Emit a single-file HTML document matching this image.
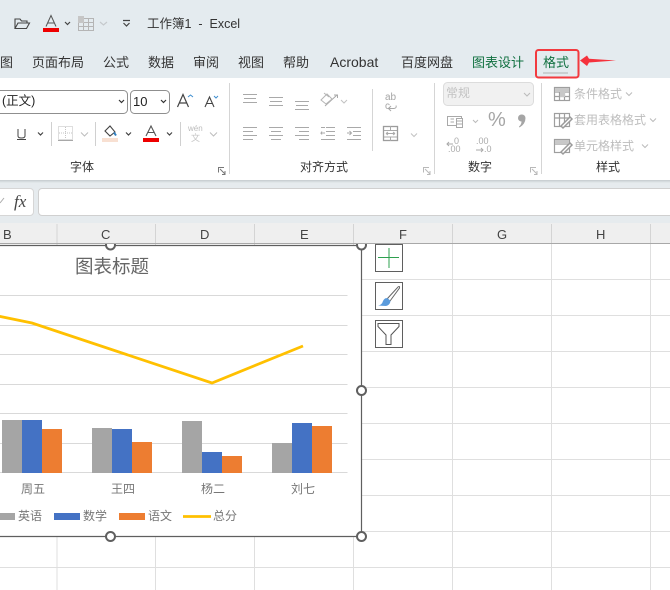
<!DOCTYPE html>
<html><head><meta charset="utf-8">
<style>
html,body{margin:0;padding:0;width:670px;height:590px;overflow:hidden;background:#fff}
body{position:relative;font-family:"Liberation Sans","Microsoft YaHei","Noto Sans CJK SC",sans-serif;color:#333}
.a{position:absolute}
.t{position:absolute;white-space:nowrap;line-height:1;font-size:13px}
svg{position:absolute;left:0;top:0}
</style></head><body>
<div class="a" style="left:0;top:0;width:670px;height:78px;background:#e4ebef"></div>
<div class="a" style="left:0;top:78px;width:670px;height:102px;background:#fff"></div>
<div class="a" style="left:0;top:180px;width:670px;height:43px;background:#e6ebee"></div>
<div class="a" style="left:0;top:180px;width:670px;height:3px;background:linear-gradient(#c5cbce,#e6ebee)"></div>
<div class="a" style="left:0;top:223px;width:670px;height:20px;background:#efefef"></div>
<div class="a" style="left:-10px;top:188px;width:42px;height:26px;background:#fff;border:1px solid #d6d6d6;border-radius:4px"></div>
<div class="a" style="left:38px;top:188px;width:640px;height:26px;background:#fff;border:1px solid #d0d0d0;border-radius:4px"></div>

<svg width="670" height="590" viewBox="0 0 670 590">
<defs><clipPath id="c"><rect x="0" y="244" width="670" height="20"/></clipPath></defs>
<!-- grid -->
<g stroke="#dfdfdf" stroke-width="1" fill="none">
<path d="M57 224V243M155.500 224V243M254.500 224V243M353.500 224V243M452.500 224V243M551.500 224V243M650.500 224V243" stroke="#d4d4d4"/>
<path d="M57 243V590M155.500 243V590M254.500 243V590M353.500 243V590M452.500 243V590M551.500 243V590M650.500 243V590"/>
<path d="M0 279.500H670M0 315.500H670M0 351.500H670M0 387.500H670M0 423.500H670M0 459.500H670M0 495.500H670M0 531.500H670M0 567.500H670"/>
</g>
<path d="M0 243.500H670" stroke="#a8a8a8" stroke-width="1"/>
<!-- chart -->
<rect x="-5" y="245" width="366.500" height="291.500" fill="#fff"/>
<path d="M0 295.500H347.500M0 325.500H347.500M0 354.500H347.500M0 384.500H347.500M0 413.500H347.500M0 443.500H347.500M0 472.500H347.500" stroke="#d9d9d9" stroke-width="1"/>
<g fill="#a5a5a5"><rect x="2" y="420" width="20" height="53"/><rect x="92" y="428" width="20" height="45"/><rect x="182" y="421" width="20" height="52"/><rect x="272" y="443" width="20" height="30"/><rect x="-13" y="513" width="28" height="7"/></g>
<g fill="#4472c4"><rect x="22" y="420" width="20" height="53"/><rect x="112" y="429" width="20" height="44"/><rect x="202" y="452" width="20" height="21"/><rect x="292" y="423" width="20" height="50"/><rect x="54" y="513" width="26" height="7"/></g>
<g fill="#ed7d31"><rect x="42" y="429" width="20" height="44"/><rect x="132" y="442" width="20" height="31"/><rect x="222" y="456" width="20" height="17"/><rect x="312" y="426" width="20" height="47"/><rect x="119" y="513" width="26" height="7"/></g>
<path d="M-2 316L32 323L212 383L303 346" fill="none" stroke="#ffc000" stroke-width="2.800"/>
<path d="M183 516.500H211" stroke="#ffc000" stroke-width="2.800"/>
<path d="M-2 245.500H361.500V536.500H-2" fill="none" stroke="#5f5f5f" stroke-width="1.200"/>
<g fill="#fff" stroke="#5f5f5f" stroke-width="2"><g clip-path="url(#c)"><circle cx="110.500" cy="245" r="4.500"/><circle cx="361.500" cy="245" r="4.500"/></g><circle cx="361.500" cy="390.500" r="4.500"/><circle cx="110.500" cy="536.500" r="4.500"/><circle cx="361.500" cy="536.500" r="4.500"/></g>
<!-- chart buttons -->
<g fill="#fff" stroke="#5f5f5f" stroke-width="1"><rect x="375.500" y="244.500" width="27" height="27"/><rect x="375.500" y="282.500" width="27" height="27"/><rect x="375.500" y="320.500" width="27" height="27"/></g>
<path d="M389 248V268M378 257.500H399" stroke="#2ea04f" stroke-width="1"/>
<path d="M387 299L398 287Q400 285.500 399.500 288L390 301Z" fill="#fff" stroke="#666" stroke-width="1"/>
<path d="M378 305.500Q382 305 383 301Q385 297 388 298.500L390.500 301Q390 305 386 306Z" fill="#5a9bdc"/>
<path d="M378 323.500H399V326.500L391 335V344.500H386V335L378 326.500Z" fill="#fff" stroke="#555" stroke-width="1"/>
<!-- fx -->
<path d="M0 203L4 198" stroke="#aaa" stroke-width="1"/>
<!-- QAT -->
<path d="M15 28V19H20L21.500 21H27V23M15 28.500L18 23H29.500L26.500 28.500H15Z" fill="none" stroke="#444" stroke-width="1.100"/>
<rect x="43" y="28" width="16" height="4" fill="#ee0000"/>
<path d="M46 26.500L51 15.500L56 26.500M47.500 23H54.500" fill="none" stroke="#555" stroke-width="1"/>
<path d="M65 22L67.500 24.500L70 22" fill="none" stroke="#444" stroke-width="1.200"/>
<g stroke="#b5b5b5" fill="none"><rect x="78.500" y="18.500" width="15" height="12"/><path d="M78 22.500H94M78 26.500H94M83.500 18V31M88.500 18V31"/></g>
<rect x="78" y="16" width="6" height="7" fill="#c6c6c6"/>
<path d="M100 22L103.500 25L107 22" fill="none" stroke="#c5c9cc" stroke-width="1.200"/>
<path d="M123 20.500H130M123.500 23L126.500 26L129.500 23" fill="none" stroke="#444" stroke-width="1.200"/>
<!-- font controls -->
<rect x="-8" y="90.500" width="135.500" height="23" rx="4" fill="#fff" stroke="#8f8f8f"/>
<rect x="130.500" y="90.500" width="39" height="23" rx="4" fill="#fff" stroke="#8f8f8f"/>
<g fill="none" stroke="#333" stroke-width="1.200"><path d="M119 100L121.500 102.500L124 100M161 100L163.500 102.500L166 100"/></g>
<path d="M177.500 107L183 94.500L188.500 107M179.500 103H186.500" fill="none" stroke="#444" stroke-width="1.200"/>
<path d="M188 97L190.500 95L193 97" fill="none" stroke="#3f8fd0" stroke-width="1"/>
<path d="M205 107L209.500 97L214 107M206.500 103.500H212.500" fill="none" stroke="#444" stroke-width="1.100"/>
<path d="M214 96L216 98L218 96" fill="none" stroke="#3f8fd0" stroke-width="1"/>
<!-- font row 2 -->
<path d="M18 129V136Q18 138 21.500 138Q25 138 25 136V129M17 139.500H26" fill="none" stroke="#444" stroke-width="1"/>
<path d="M38 132.500L40.500 135L43 132.500M126 132.500L128.500 135L131 132.500M167 132.500L169.500 135L172 132.500" fill="none" stroke="#444" stroke-width="1.200"/>
<path d="M51.500 122V146M95.500 122V146M180.500 122V146" stroke="#d0d0d0"/>
<rect x="58.500" y="126.500" width="14" height="13" fill="none" stroke="#bcbcbc" stroke-dasharray="1 1"/>
<path d="M58 140.500H73" stroke="#a8a8a8"/>
<path d="M65.500 127V139M59 133H72" stroke="#c5c5c5" stroke-dasharray="1 1"/>
<path d="M81 132.500L84.500 136L88 132.500M210 132.500L213.500 136L217 132.500" fill="none" stroke="#bdbdbd" stroke-width="1"/>
<rect x="102" y="138" width="16" height="4" fill="#f8e0d2"/>
<path d="M105 131L110 126L115 132L110 136Z" fill="none" stroke="#444" stroke-width="1.100"/>
<path d="M114 132.500L116 135.500" stroke="#2f7fc1" stroke-width="2"/>
<rect x="143" y="138" width="16" height="4" fill="#ee0000"/>
<path d="M146 136L151 126L156 136M148 132.500H154" fill="none" stroke="#555" stroke-width="1.100"/>
<!-- dividers -->
<path d="M229.500 83V174M434.500 83V174M541.500 83V174" stroke="#d5d5d5"/>
<path d="M372.500 89V151" stroke="#d5d5d5"/>
<!-- align -->
<g stroke="#a9a9a9" stroke-width="1" fill="none">
<path d="M243 94.500H257M244 98.500H256M243 102.500H257"/>
<path d="M269 97.500H283M270 101.500H282M269 105.500H283"/>
<path d="M295 101.500H309M296 105.500H308M295 109.500H309"/>
<path d="M243 127.500H257M243 131.500H253M243 135.500H257M243 139.500H253"/>
<path d="M269 127.500H283M271 131.500H281M269 135.500H283M271 139.500H281"/>
<path d="M295 127.500H309M299 131.500H309M295 135.500H309M299 139.500H309"/>
<path d="M326 127.500H335M326 131.500H335M326 135.500H335M321 139.500H335M321 127.500H325M322 131.500L321 133L325 133M322 134.500L321 133"/>
<path d="M347 127.500H361M353 131.500H361M353 135.500H361M347 139.500H361M347 133H351M349.500 131L351.500 133L349.500 135"/>
<path d="M325 106L337 95M334 95H337.500V98"/>
<path d="M321 100L327 94L332 99L326 104Z M324 93L329 97" stroke="#b5b5b5"/>
<path d="M341 100L344 103L347 100M411 133.500L414 136.500L417 133.500" stroke="#c2c2c2"/>
<path d="M388 108.500H394Q397 108 396 105.500M388.500 108.500L391 106M388.500 108.500L391 111" stroke="#a9a9a9"/>
<rect x="383.500" y="126.500" width="14" height="14" stroke="#9c9c9c" stroke-width="1.300"/>
<path d="M384 130.500H397M384 137H397M390.500 126V130M390.500 137V141M386 133.500H395M386 133.500L388 132M386 133.500L388 135M395 133.500L393 132M395 133.500L393 135"/>
</g>
<!-- number -->
<rect x="443.500" y="82.500" width="90" height="23" rx="4" fill="#f1f1f1" stroke="#dcdcdc"/>
<path d="M524 93L527 96L530 93M473 120L475.500 122.500L478 120M626 92.500L629 95.500L632 92.500M650 118.500L653 121.500L656 118.500M642 144.500L645 147.500L648 144.500" fill="none" stroke="#bbb" stroke-width="1"/>
<g fill="none" stroke="#a9a9a9" stroke-width="1">
<rect x="447.500" y="116.500" width="14" height="9"/>
<rect x="456.500" y="118.500" width="6" height="9" fill="#fff"/><path d="M456.500 121H462.500M456.500 124H462.500M450.500 119H454M450.500 122H454"/>
<path d="M447 144H453M449 142L447 144L449 146"/>
<path d="M476 150H483M481 148L483 150L481 152"/>
</g>
<path d="M521.500 114.500A3.500 3.500 0 0 1 525.500 118Q525.500 124 519.500 127.500L519 126.500Q521.500 124.500 521.500 121.500A3.500 3.500 0 0 1 521.500 114.500Z" fill="#a5a5a5"/>
<!-- styles -->
<g fill="none" stroke="#9e9e9e" stroke-width="1.200">
<rect x="554.500" y="87.500" width="15" height="13"/><path d="M554 92H570M554 96.500H570M559.500 87V101M564.500 87V101"/>
<rect x="554.500" y="113.500" width="15" height="13"/><path d="M554 118H570M559.500 113V127M564.500 113V122"/>
<rect x="554.500" y="139.500" width="15" height="13"/><path d="M554 144H570M559.500 139V144"/>
</g>
<rect x="555" y="88" width="14" height="4" fill="#c8c8c8"/>
<rect x="560" y="92" width="5" height="5" fill="#c8c8c8"/>
<rect x="555" y="140" width="14" height="4" fill="#c8c8c8"/>
<path d="M561 126L570 117L572 119L563 128ZM561 152L570 143L572 145L563 154Z" fill="#fff" stroke="#9a9a9a" stroke-width="1.500"/>
<!-- dialog launchers -->
<g fill="none" stroke="#777" stroke-width="1"><path d="M218.500 172.500V167.500H224M220 169L225 174M225 171V174.500H222"/></g>
<g fill="none" stroke="#b9b9b9" stroke-width="1"><path d="M423.500 172.500V167.500H429M425 169L430 174M430 171V174.500H427"/><path d="M530.500 172.500V167.500H536M532 169L537 174M537 171V174.500H534"/></g>
<!-- format highlight -->
<rect x="536" y="50" width="42.500" height="27.500" rx="2.500" fill="none" stroke="#f23a3f" stroke-width="2"/>
<rect x="543" y="72" width="25" height="2" fill="#c9cfd1"/>
<path d="M580 60.500L587 55.500L589 58.800L616 60.500L589 62.500L587 66Z" fill="#f5323c"/>
</svg>

<div class="t" style="left:147px;top:18px;font-size:12.500px;color:#333">工作簿1 &nbsp;- &nbsp;Excel</div>
<div class="t" style="left:0;top:56px;color:#333">图</div>
<div class="t" style="left:32px;top:56px;color:#333">页面布局</div>
<div class="t" style="left:103px;top:56px;color:#333">公式</div>
<div class="t" style="left:148px;top:56px;color:#333">数据</div>
<div class="t" style="left:193px;top:56px;color:#333">审阅</div>
<div class="t" style="left:238px;top:56px;color:#333">视图</div>
<div class="t" style="left:283px;top:56px;color:#333">帮助</div>
<div class="t" style="left:330px;top:55px;font-size:14px;color:#333">Acrobat</div>
<div class="t" style="left:401px;top:56px;color:#333">百度网盘</div>
<div class="t" style="left:472px;top:56px;color:#107040">图表设计</div>
<div class="t" style="left:543px;top:56px;color:#107040">格式</div>

<div class="t" style="left:2px;top:95px;font-size:12.500px;color:#222">(正文)</div>
<div class="t" style="left:133px;top:95px;font-size:13px;color:#222">10</div>
<div class="t" style="left:188px;top:125px;font-size:8px;color:#bbb">wén</div>
<div class="t" style="left:191px;top:134px;font-size:9px;color:#c5c5c5">文</div>
<div class="t" style="left:70px;top:161px;font-size:12px;color:#333">字体</div>
<div class="t" style="left:300px;top:161px;font-size:12px;color:#333">对齐方式</div>
<div class="t" style="left:468px;top:161px;font-size:12px;color:#333">数字</div>
<div class="t" style="left:596px;top:161px;font-size:12px;color:#333">样式</div>
<div class="t" style="left:385px;top:93px;font-size:10px;color:#a5a5a5">ab</div>
<div class="t" style="left:385px;top:102px;font-size:10px;color:#a5a5a5">c</div>
<div class="t" style="left:446px;top:87px;font-size:12px;color:#c2c2c2">常规</div>
<div class="t" style="left:488px;top:110px;font-size:20px;color:#a5a5a5">%</div>
<div class="t" style="left:454px;top:137px;font-size:9px;color:#aaa">0</div>
<div class="t" style="left:448px;top:145px;font-size:9px;color:#aaa">.00</div>
<div class="t" style="left:476px;top:137px;font-size:9px;color:#aaa">.00</div>
<div class="t" style="left:484px;top:145px;font-size:9px;color:#aaa">.0</div>
<div class="t" style="left:574px;top:88px;font-size:12px;color:#bdbdbd">条件格式</div>
<div class="t" style="left:574px;top:114px;font-size:12px;color:#bdbdbd">套用表格格式</div>
<div class="t" style="left:574px;top:140px;font-size:12px;color:#bdbdbd">单元格样式</div>
<div class="t" style="left:14px;top:193px;font-size:17px;font-style:italic;font-family:'Liberation Serif',serif;color:#444">fx</div>
<div class="t" style="left:3px;top:228px;font-size:13px;color:#444">B</div>
<div class="t" style="left:101px;top:228px;font-size:13px;color:#444">C</div>
<div class="t" style="left:200px;top:228px;font-size:13px;color:#444">D</div>
<div class="t" style="left:300px;top:228px;font-size:13px;color:#444">E</div>
<div class="t" style="left:399px;top:228px;font-size:13px;color:#444">F</div>
<div class="t" style="left:497px;top:228px;font-size:13px;color:#444">G</div>
<div class="t" style="left:596px;top:228px;font-size:13px;color:#444">H</div>
<div class="t" style="left:75px;top:258px;font-size:18.500px;color:#666">图表标题</div>
<div class="t" style="left:21px;top:483px;font-size:12px;color:#777">周五</div>
<div class="t" style="left:111px;top:483px;font-size:12px;color:#777">王四</div>
<div class="t" style="left:201px;top:483px;font-size:12px;color:#777">杨二</div>
<div class="t" style="left:291px;top:483px;font-size:12px;color:#777">刘七</div>
<div class="t" style="left:18px;top:510px;font-size:12px;color:#777">英语</div>
<div class="t" style="left:83px;top:510px;font-size:12px;color:#777">数学</div>
<div class="t" style="left:148px;top:510px;font-size:12px;color:#777">语文</div>
<div class="t" style="left:213px;top:510px;font-size:12px;color:#777">总分</div>
</body></html>
